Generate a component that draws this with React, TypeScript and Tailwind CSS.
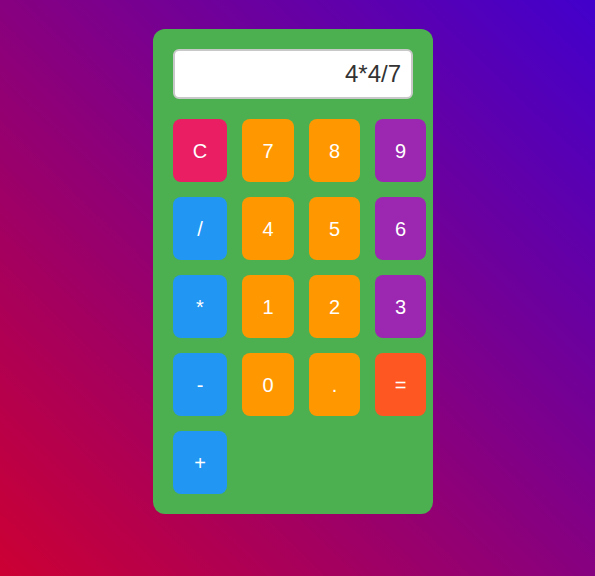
const keys = [
  { label: 'C', color: 'bg-[#e91e63]' },
  { label: '7', color: 'bg-[#ff9800]' },
  { label: '8', color: 'bg-[#ff9800]' },
  { label: '9', color: 'bg-[#9c27b0]' },
  { label: '/', color: 'bg-[#2196f3]' },
  { label: '4', color: 'bg-[#ff9800]' },
  { label: '5', color: 'bg-[#ff9800]' },
  { label: '6', color: 'bg-[#9c27b0]' },
  { label: '*', color: 'bg-[#2196f3]' },
  { label: '1', color: 'bg-[#ff9800]' },
  { label: '2', color: 'bg-[#ff9800]' },
  { label: '3', color: 'bg-[#9c27b0]' },
  { label: '-', color: 'bg-[#2196f3]' },
  { label: '0', color: 'bg-[#ff9800]' },
  { label: '.', color: 'bg-[#ff9800]' },
  { label: '=', color: 'bg-[#ff5722]' },
  { label: '+', color: 'bg-[#2196f3]' },
];

export default function App() {
  return (
    <div className="min-h-[576px] w-full bg-[linear-gradient(to_top_right,#cc0033,#4200cc)] pl-[153px] pt-[29px] font-['Liberation_Sans',Arial,sans-serif]">
      <div className="w-[280px] rounded-xl bg-[#4caf50] p-5">
        <input
          readOnly
          value="4*4/7"
          className="block h-[50px] w-full rounded-md border-2 border-[#c8c8c8] bg-white px-[10px] text-right text-2xl text-[#333] outline-none"
        />
        <div className="mt-5 grid grid-cols-[54px_52px_51px_51px] gap-[15px]">
          {keys.map((k) => (
            <button
              key={k.label}
              className={`${k.color} flex h-[63px] items-center justify-center rounded-lg text-xl text-white`}
            >
              {k.label}
            </button>
          ))}
        </div>
      </div>
    </div>
  );
}
